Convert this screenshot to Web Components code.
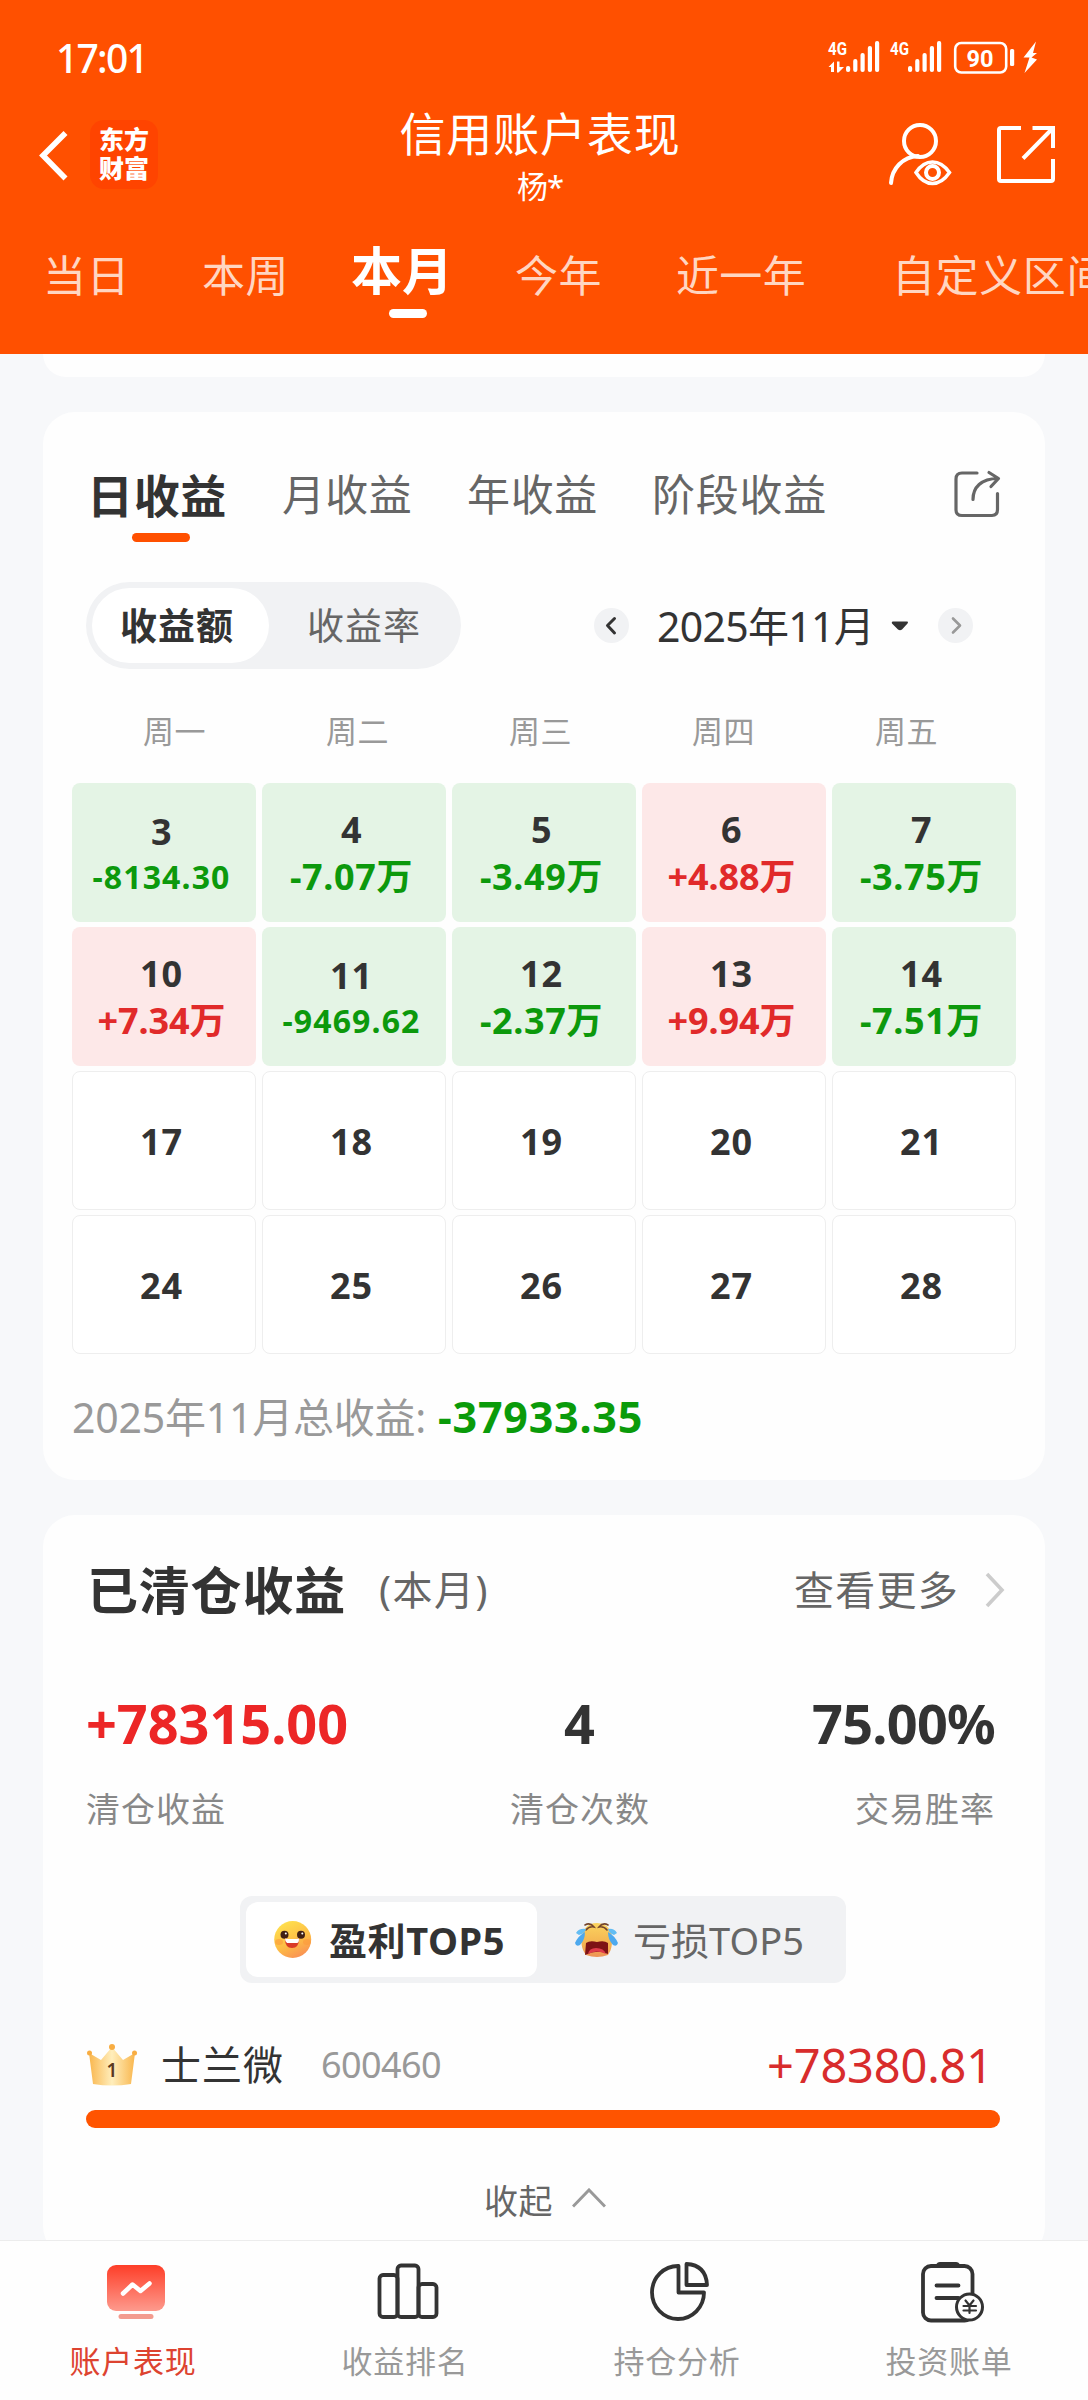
<!DOCTYPE html>
<html lang="zh-CN">
<head>
<meta charset="utf-8">
<title>信用账户表现</title>
<style>
    body {
        margin: 0;
        width: 1088px;
        height: 2400px;
        overflow: hidden;
        background: #f7f8fa;
        color: #333;
        font-family: "Noto Sans", "Noto Sans CJK SC", sans-serif;
    }
</style>
</head>
<body>
<account-page></account-page>

<script>
// Small helper: open shadow root filled with markup
class BaseElement extends HTMLElement {
    constructor() {
        super();
        this.attachShadow({ mode: 'open' });
    }
    connectedCallback() {
        this.shadowRoot.innerHTML = this.render();
    }
}

class AccountPage extends BaseElement {
    render() {
        return `
        <style>
            :host { display: flex; flex-direction: column; height: 2400px; }
            main { flex: 1; min-height: 0; overflow: hidden; padding: 0 43px; }
            ui-card.rest { height: 23px; border-radius: 0 0 32px 32px; }
            ui-card.days { margin-top: 35px; height: 1068px; }
            ui-card.closed { margin-top: 35px; height: 743px; }
        </style>
        <app-header></app-header>
        <main>
            <ui-card class="rest"></ui-card>
            <ui-card class="days"><profit-calendar></profit-calendar></ui-card>
            <ui-card class="closed"><closed-profit></closed-profit></ui-card>
        </main>
        <tab-bar></tab-bar>`;
    }
}

class UiCard extends BaseElement {
    render() {
        return `
        <style>
            :host { display: block; box-sizing: border-box; width: 1002px; border-radius: 32px; background: #fefefe; }
        </style>
        <slot></slot>`;
    }
}

class AppHeader extends BaseElement {
    render() {
        return `
        <style>
            :host { display: block; flex: none; height: 354px; background: #ff5000; color: #fff; overflow: hidden; }
            nav { display: flex; align-items: flex-start; height: 106px; }
            svg { display: block; flex: none; }
            .back { margin: 20px 0 0 36px; }
            .logo {
                box-sizing: border-box; width: 68px; height: 69px; margin: 12px 0 0 18px; padding-top: 4px;
                border-radius: 14px; background: #ff4400; text-align: center;
                font: 900 25px/29px "Noto Sans CJK SC", sans-serif;
            }
            .title { display: flex; flex-direction: column; align-items: center; width: 280px; margin-left: 242px; }
            .user { margin: 13px 0 0 206px; }
            .share { margin: 15px 0 0 41px; }
        </style>
        <status-bar></status-bar>
        <nav>
            <svg class="back" width="36" height="56" viewBox="0 0 36 56" fill="none" stroke="#fff" stroke-width="5.6"><path d="M29.5 5 7 27.500 29.500 50.500"/></svg>
            <div class="logo">东方<br>财富</div>
            <div class="title">
                <fit-label size="46" w="281" lh="51">信用账户表现</fit-label>
                <fit-label size="31" w="46" lh="54">杨*</fit-label>
            </div>
            <svg class="user" width="68" height="68" viewBox="886 121 68 68" fill="none" stroke="#fff" stroke-width="4" stroke-linecap="round">
                <circle cx="920" cy="141" r="16"/>
                <path d="M891 183c1-15 12-26 27-27"/>
                <path d="M916 172.500Q923 162 932.500 162T949.500 172.500Q942 183.500 932.500 183.500T916 172.500Z" stroke-width="3.500"/>
                <circle cx="932.500" cy="172.500" r="6.500" stroke-width="4"/>
            </svg>
            <svg class="share" width="62" height="62" viewBox="994 123 62 62" fill="none" stroke="#fff" stroke-width="4">
                <path d="M1020 128h-20q-2 0-2 2v49q0 2 2 2h50q2 0 2-2v-20"/>
                <path d="M1031.500 128H1052v20M1052 128l-30 30.500"/>
            </svg>
        </nav>
        <period-tabs></period-tabs>`;
    }
}

class StatusBar extends BaseElement {
    bars(x) {
        return [[0, 66], [7.200, 59], [14.500, 53], [21.800, 46], [29, 41]]
            .map(([dx, y]) => `<rect x="${x + dx}" y="${y}" width="4.200" height="${72 - y}" rx="2"/>`).join('');
    }
    render() {
        return `
        <style>
            :host { display: flex; justify-content: space-between; align-items: center; box-sizing: border-box; height: 108px; padding: 8px 46px 0 56px; }
            svg { display: block; }
            text { font-family: Roboto, "Noto Sans", sans-serif; font-weight: 700; }
        </style>
        <fit-label size="39" w="91" weight="500">17:01</fit-label>
        <svg width="216" height="40" viewBox="826 38 216 40" fill="#fff">
            <text x="828" y="55" font-size="19" textLength="19" lengthAdjust="spacingAndGlyphs">4G</text>
            <path d="M828.500 67 834 61.500V72h-3v-5zM837 61.500h2.500V67H844l-5.500 5.500H837z"/>
            ${this.bars(846)}
            <text x="890" y="55" font-size="19" textLength="19" lengthAdjust="spacingAndGlyphs">4G</text>
            ${this.bars(908)}
            <rect x="955.200" y="43" width="51" height="29.500" rx="6" fill="none" stroke="#fff" stroke-width="2.600"/>
            <text x="966.500" y="66.500" font-size="24" textLength="27" lengthAdjust="spacingAndGlyphs">90</text>
            <rect x="1010" y="49" width="4.200" height="17" rx="1.500"/>
            <path d="M1036 41.500 1023.500 57.500h6l-5 15.500L1037 59.500l-5.500-2 5.500-4.500h-4z"/>
        </svg>`;
    }
}

class PeriodTabs extends BaseElement {
    render() {
        return `
        <style>
            :host { display: flex; align-items: flex-start; height: 140px; box-sizing: border-box; padding: 32px 0 0 43px; color: #ffd6c2; }
            .on { display: flex; flex-direction: column; align-items: center; margin: -6px 62px 0; color: #fff; }
            i { width: 38px; height: 9px; margin: 9px 0 0 12px; border-radius: 5px; background: #fff; }
        </style>
        <fit-label size="43" w="87" lh="60">当日</fit-label>
        <fit-label size="43" w="87" lh="60" style="margin-left:72px">本周</fit-label>
        <div class="on"><fit-label size="51" w="102" lh="60" weight="700">本月</fit-label><i></i></div>
        <fit-label size="43" w="87" lh="60">今年</fit-label>
        <fit-label size="43" w="130" lh="60" style="margin-left:74px">近一年</fit-label>
        <fit-label size="43" w="218" lh="60" style="margin-left:86px">自定义区间</fit-label>`;
    }
}

class ProfitCalendar extends BaseElement {
    render() {
        const days = [
            [3, '-8134.30'], [4, '-7.07万'], [5, '-3.49万'], [6, '+4.88万'], [7, '-3.75万'],
            [10, '+7.34万'], [11, '-9469.62'], [12, '-2.37万'], [13, '+9.94万'], [14, '-7.51万'],
            [17], [18], [19], [20], [21], [24], [25], [26], [27], [28]
        ];
        return `
        <style>
            :host { display: block; }
            svg { display: block; flex: none; }
            .tabs { display: flex; align-items: flex-start; height: 170px; box-sizing: border-box; padding: 53px 0 0 44px; color: #666; }
            .on { display: flex; flex-direction: column; align-items: center; width: 140px; margin-right: 55px; color: #333; }
            .on i { width: 58px; height: 9px; margin: 8px 0 0 8px; border-radius: 5px; background: #ff5000; }
            .share { margin: 3px 0 0 125px; }
            .filter { display: flex; align-items: center; height: 87px; padding-left: 43px; }
            .seg { display: flex; align-items: center; box-sizing: border-box; width: 375px; height: 87px; padding: 6px; border-radius: 44px; background: #f1f2f4; color: #666; }
            .seg div { display: flex; align-items: center; box-sizing: border-box; width: 177px; height: 75px; margin-right: 38px; padding-left: 28px; border-radius: 38px; background: #fff; color: #333; }
            .week { display: grid; grid-template-columns: repeat(5, 183px); justify-items: center; height: 114px; box-sizing: border-box; padding: 38px 0 0 40px; color: #999; }
            .grid { display: grid; grid-template-columns: repeat(5, 184px); grid-auto-rows: 139px; gap: 5px 6px; margin-left: 29px; }
            .total { display: flex; align-items: center; height: 126px; padding-left: 29px; color: #999; }
            .total .sum { margin-left: 12px; color: #0a9b0a; }
        </style>
        <div class="tabs">
            <div class="on"><fit-label size="46" w="140" lh="60" weight="700">日收益</fit-label><i></i></div>
            <fit-label size="43" w="130" lh="60">月收益</fit-label>
            <fit-label size="43" w="131" lh="60" style="margin-left:55px">年收益</fit-label>
            <fit-label size="43" w="175" lh="60" style="margin-left:54px">阶段收益</fit-label>
            <svg class="share" width="50" height="52" viewBox="953 468 50 52" fill="none" stroke="#666" stroke-width="3.200" stroke-linecap="round" stroke-linejoin="round">
                <path d="M978 473h-15q-6 0-6 6v31q0 5.500 6 5.500h30q5.500 0 5.500-6v-16"/>
                <path d="M974 499.500c0-12 8-21 25-21M990 472.500l9.500 6-7.500 8"/>
            </svg>
        </div>
        <div class="filter">
            <div class="seg">
                <div><fit-label size="37" w="114" weight="700">收益额</fit-label></div>
                <fit-label size="37" w="114">收益率</fit-label>
            </div>
            <svg width="35" height="35" viewBox="0 0 35 35" style="margin-left:133px"><circle cx="17.500" cy="17.500" r="17.500" fill="#f1f2f4"/><path d="M20.500 10.500 13.500 17.500 20.500 25" fill="none" stroke="#333" stroke-width="3" stroke-linecap="round" stroke-linejoin="round"/></svg>
            <fit-label size="41" w="217" style="margin-left:28px">2025年11月</fit-label>
            <svg width="18" height="10" viewBox="0 0 18 10" style="margin-left:17px"><path d="M1.500.5h15q1 1 0 2L11 8.500q-2 1.500-4 0L1 2.500q-.8-1 .5-2z" fill="#333"/></svg>
            <svg width="35" height="35" viewBox="0 0 35 35" style="margin-left:29px"><circle cx="17.500" cy="17.500" r="17.500" fill="#f1f2f4"/><path d="M15 10.500 22 17.500 15 24.500" fill="none" stroke="#999" stroke-width="2.600" stroke-linecap="round" stroke-linejoin="round"/></svg>
        </div>
        <div class="week">${['周一', '周二', '周三', '周四', '周五'].map(d => `<fit-label size="31" w="63" lh="49">${d}</fit-label>`).join('')}</div>
        <div class="grid">${days.map(([d, v]) => `<day-cell day="${d}" value="${v || ''}"></day-cell>`).join('')}</div>
        <div class="total">
            <fit-label size="41" w="354">2025年11月总收益:</fit-label>
            <fit-label class="sum" size="43" w="205" weight="700">-37933.35</fit-label>
        </div>`;
    }
}

class DayCell extends BaseElement {
    render() {
        const day = this.getAttribute('day');
        const value = this.getAttribute('value');
        const small = value && !value.includes('万');
        const up = value[0] === '+';
        const bg = !value ? '#fff' : up ? '#fde8e8' : '#e4f4e5';
        return `
        <style>
            :host {
                display: flex; flex-direction: column; align-items: center; justify-content: center;
                box-sizing: border-box; padding: ${value ? 0 : 3}px 5px 0 0; border-radius: 8px; background: ${bg};
                border: ${value ? '0' : '1px solid #eee'};
            }
            .value { color: ${up ? '#e12a2a' : '#0c990c'}; margin-bottom: ${small ? -4 : 0}px; }
        </style>
        <fit-label size="36" w="${day > 9 ? 43 : 21}" lh="${small ? 44 : 48}" weight="700">${day}</fit-label>
        ${value ? `<fit-label class="value" size="${small ? 32 : 36}" w="${small ? 138 : up ? 128 : 123}" lh="46" weight="700">${value}</fit-label>` : ''}`;
    }
}

class ClosedProfit extends BaseElement {
    render() {
        return `
        <style>
            :host { display: block; padding: 0 43px; }
            svg { display: block; flex: none; }
            .head { display: flex; align-items: center; height: 150px; }
            .head .sub { margin-left: 33px; color: #666; }
            .head .more { margin: 0 26px 0 auto; color: #666; }
            .stats { display: flex; justify-content: space-between; height: 231px; padding-right: 7px; box-sizing: border-box; }
            .seg { display: flex; align-items: center; box-sizing: border-box; width: 606px; height: 87px; margin-left: 154px; padding: 6px; border-radius: 12px; background: #f1f2f4; color: #666; }
            .seg div { display: flex; align-items: center; width: 291px; height: 75px; margin-right: 37px; border-radius: 12px; background: #fff; color: #333; }
            .row { display: flex; align-items: center; height: 127px; padding-top: 36px; box-sizing: border-box; }
            .row .code { margin-left: 37px; color: #999; }
            .row .sum { margin: 0 9px 0 auto; color: #d82c2c; }
            .bar { width: 914px; height: 18px; border-radius: 9px; background: #ff5400; }
            .fold { display: flex; align-items: center; height: 145px; padding-left: 398px; color: #666; }
        </style>
        <div class="head">
            <fit-label size="51" w="259" weight="700" style="margin-left:1px">已清仓收益</fit-label>
            <fit-label class="sub" size="40" w="110">(本月)</fit-label>
            <fit-label class="more" size="40" w="165">查看更多</fit-label>
            <svg width="20" height="36" viewBox="0 0 20 36" style="margin-right:-3px" fill="none" stroke="#ccc" stroke-width="3.600"><path d="M2 2 17 18 2 34"/></svg>
        </div>
        <div class="stats">
            <stat-item label="清仓收益" w="262" align="flex-start" color="#ec2626">+78315.00</stat-item>
            <stat-item label="清仓次数" w="32" align="center" color="#333">4</stat-item>
            <stat-item label="交易胜率" w="183" align="flex-end" color="#333">75.00%</stat-item>
        </div>
        <div class="seg">
            <div>
                <svg width="40" height="40" viewBox="0 0 40 40" style="margin:0 16px 0 27px">
                    <defs><linearGradient id="f" x1=".2" y1="0" x2=".7" y2="1"><stop offset="0" stop-color="#ffe34f"/><stop offset=".6" stop-color="#fdbb45"/><stop offset="1" stop-color="#f98f55"/></linearGradient></defs>
                    <circle cx="19.700" cy="19.500" r="18.500" fill="url(#f)"/>
                    <ellipse cx="6" cy="22" rx="4" ry="3" fill="#fb9a3c" opacity=".6"/><ellipse cx="34" cy="22" rx="4" ry="3" fill="#fb9a3c" opacity=".6"/>
                    <circle cx="11.500" cy="14.800" r="4" fill="#402015"/><circle cx="28" cy="14.800" r="4" fill="#402015"/>
                    <circle cx="12.800" cy="13.500" r="1" fill="#fff"/><circle cx="29.300" cy="13.500" r="1" fill="#fff"/>
                    <path d="M12 18.500Q19 19.500 26 18.500 26 28 19 28T12 18.500z" fill="#d93a28"/>
                    <path d="M12 18.500Q19 19.500 26 18.500 26 23 24 23H14Q12 22 12 18.500z" fill="#fff"/>
                </svg>
                <fit-label size="38" w="176" weight="700">盈利TOP5</fit-label>
            </div>
            <svg width="46" height="40" viewBox="0 0 46 40" style="margin-right:13px">
                <defs><linearGradient id="c" x1="0" y1="0" x2="0" y2="1"><stop offset="0" stop-color="#fbd45f"/><stop offset=".7" stop-color="#f3ae4f"/><stop offset="1" stop-color="#ee9257"/></linearGradient></defs>
                <path d="M23 3C34 3 39 12 38 21 38 30 35 33 34 35Q23 39 12 35C10 32 7 28 7.500 19 8 10 13 3 23 3z" fill="url(#c)"/>
                <path d="M11 5q5-3 9 2-5-1-8 3M34 5q-5-3-9 2 5-1 8 3" fill="none" stroke="#74452c" stroke-width="1.600" stroke-linecap="round"/>
                <path d="M2 13q3-5 10-4-1 4-7 6zM43 13q-3-5-9-4 1 4 6 6z" fill="#63bdf3"/>
                <path d="M11 12q-7 4-10 11 1 4 5 2 5-5 5-13zM34 12q7 4 10 11-1 4-5 2-5-5-5-13z" fill="#4da9ee"/>
                <path d="M12 23Q16 20 23 22 30 20 34 23V34Q23 29 11 35z" fill="#7d1215"/>
                <path d="M14 34Q15 28 22 28 30 28 32 34 23 29 14 34z" fill="#df3b4a"/>
            </svg>
            <fit-label size="38" w="171">亏损TOP5</fit-label>
        </div>
        <div class="row">
            <svg width="52" height="44" viewBox="0 0 52 44">
                <defs><linearGradient id="g" x1="0" y1="0" x2="1" y2="0"><stop offset="0" stop-color="#f9b64d"/><stop offset=".5" stop-color="#ffeebc"/><stop offset="1" stop-color="#f9b64d"/></linearGradient></defs>
                <path d="M3 10 15 17 26 4 37 17 49 10 45 41Q26 44 7 41z" fill="url(#g)"/>
                <circle cx="26" cy="4" r="3" fill="#f8ad42"/><circle cx="3.500" cy="10" r="2.500" fill="#f8ad42"/><circle cx="48.500" cy="10" r="2.500" fill="#f8ad42"/>
                <text x="26" y="34" font-size="19" font-weight="600" text-anchor="middle" fill="#5a3a20">1</text>
            </svg>
            <fit-label size="40" w="123" style="margin-left:23px">士兰微</fit-label>
            <fit-label class="code" size="36" w="120">600460</fit-label>
            <fit-label class="sum" size="47" w="226">+78380.81</fit-label>
        </div>
        <div class="bar"></div>
        <div class="fold">
            <fit-label size="34" w="69">收起</fit-label>
            <svg width="34" height="20" viewBox="0 0 34 20" style="margin-left:19px;margin-top:-6px" fill="none" stroke="#999" stroke-width="3"><path d="M1 18.500 17 2 33 18.500"/></svg>
        </div>`;
    }
}

class StatItem extends BaseElement {
    render() {
        return `
        <style>
            :host { display: flex; flex-direction: column; align-items: ${this.getAttribute('align')}; padding-top: 23px; }
            .num { color: ${this.getAttribute('color')}; }
            .label { color: #888; margin-top: 26px; }
        </style>
        <fit-label class="num" size="54" w="${this.getAttribute('w')}" lh="70" weight="700">${this.textContent}</fit-label>
        <fit-label class="label" size="34" w="140" lh="50">${this.getAttribute('label')}</fit-label>`;
    }
}

class TabBar extends BaseElement {
    render() {
        return `
        <style>
            :host { display: flex; flex: none; box-sizing: border-box; height: 160px; border-top: 1px solid #ececec; background: #fefefe; }
            svg { display: block; }
        </style>
        <tab-item label="账户表现" color="#dd4330">
            <svg width="66" height="64" viewBox="103 2260 66 64">
                <defs><linearGradient id="t" x1="0" y1="0" x2="0" y2="1"><stop offset="0" stop-color="#fe3e28"/><stop offset="1" stop-color="#fd9a8d"/></linearGradient></defs>
                <rect x="107" y="2265" width="58" height="46" rx="9" fill="url(#t)"/>
                <path d="M123 2293.500 132.500 2284.500 140.500 2291 149.500 2283.500" fill="none" stroke="#fff" stroke-width="4.500" stroke-linecap="round" stroke-linejoin="round"/>
                <rect x="118.500" y="2314" width="35" height="5" rx="2.500" fill="#f39c8f"/>
            </svg>
        </tab-item>
        <tab-item label="收益排名" color="#999">
            <svg width="66" height="64" viewBox="375 2260 66 64" fill="none" stroke="#333" stroke-width="3.800">
                <rect x="379.500" y="2275" width="18" height="42" rx="3.500"/>
                <rect x="397.500" y="2265.500" width="21" height="51.500" rx="3.500"/>
                <rect x="418.500" y="2284" width="18" height="33" rx="3.500"/>
            </svg>
        </tab-item>
        <tab-item label="持仓分析" color="#999">
            <svg width="66" height="64" viewBox="647 2260 66 64" fill="none" stroke="#333" stroke-width="3.800" stroke-linejoin="round">
                <path d="M678.500 2266A26 26.500 0 1 0 704 2292.500H678.500z"/>
                <path d="M686.500 2264V2285H707Q706 2265 686.500 2264z"/>
            </svg>
        </tab-item>
        <tab-item label="投资账单" color="#999">
            <svg width="66" height="64" viewBox="919 2260 66 64" fill="none" stroke="#333" stroke-width="3.800" stroke-linecap="round">
                <rect x="923" y="2266" width="49.500" height="54.500" rx="8"/>
                <path d="M936 2265q1-3 4-3h16q3 0 4 3v2h-24z" fill="#333" stroke="none"/>
                <path d="M936.500 2285.500h22M936.500 2298h22"/>
                <circle cx="969.500" cy="2307" r="13" fill="#fefefe" stroke-width="3"/>
                <path d="M965.500 2300.500 969.500 2305.500 973.500 2300.500M969.500 2305v8M963.500 2306h12.500M963.500 2310.500h12.500" stroke-width="2.200"/>
            </svg>
        </tab-item>`;
    }
}

class TabItem extends BaseElement {
    render() {
        return `
        <style>
            :host { display: flex; flex-direction: column; align-items: center; width: 272px; box-sizing: border-box; padding-top: 19px; color: ${this.getAttribute('color')}; }
            fit-label { margin: 12px 6px 0 0; }
        </style>
        <slot></slot>
        <fit-label size="31" w="127" lh="50">${this.getAttribute('label')}</fit-label>`;
    }
}

// One line of text, tracked out or in so that it fills exactly the given width
class FitLabel extends BaseElement {
    render() {
        return `
        <style>
            :host {
                display: block; flex: none; width: max-content; white-space: nowrap;
                font-size: ${this.getAttribute('size')}px;
                font-weight: ${this.getAttribute('weight') || 400};
                line-height: ${this.getAttribute('lh') || 60}px;
            }
        </style>
        <slot></slot>`;
    }
    connectedCallback() {
        super.connectedCallback();
        const target = Number(this.getAttribute('w'));
        const natural = this.getBoundingClientRect().width;
        this.style.letterSpacing = `${(target - natural) / this.textContent.length}px`;
        this.style.width = `${target}px`;
    }
}

customElements.define('account-page', AccountPage);
customElements.define('ui-card', UiCard);
customElements.define('app-header', AppHeader);
customElements.define('status-bar', StatusBar);
customElements.define('period-tabs', PeriodTabs);
customElements.define('profit-calendar', ProfitCalendar);
customElements.define('day-cell', DayCell);
customElements.define('closed-profit', ClosedProfit);
customElements.define('stat-item', StatItem);
customElements.define('tab-bar', TabBar);
customElements.define('tab-item', TabItem);
// last, so every parent is laid out when labels are measured
customElements.define('fit-label', FitLabel);
</script>
</body>
</html>
